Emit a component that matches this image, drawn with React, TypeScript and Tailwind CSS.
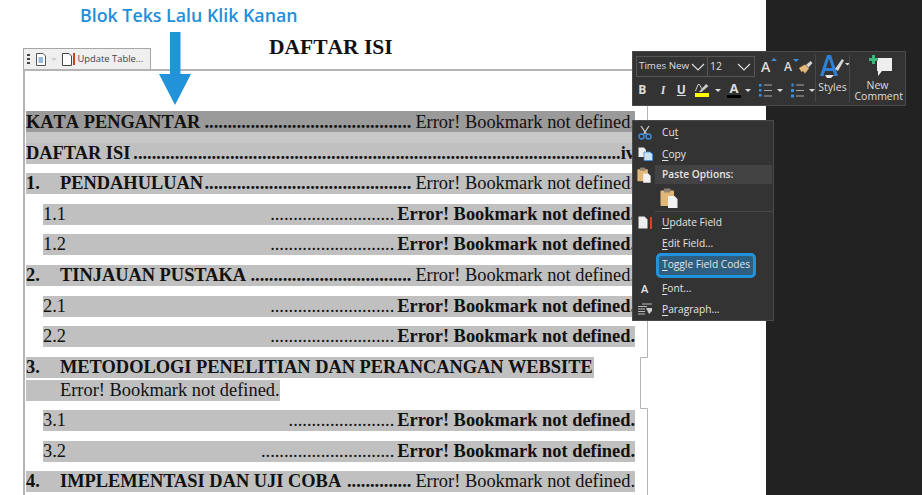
import React from "react";

const serif = "font-['Liberation_Serif','Times_New_Roman',serif]";

type RowProps = {
  mt: string;
  label: string;
  num?: string;
  dots: number;
  rowClass?: string;
  page?: boolean;
};

function HeadRow({ mt, num, label, dots, rowClass = "bg-[#c0c0c0]", page }: RowProps) {
  return (
    <div className={`${mt} ${rowClass} h-[21px] flex items-center justify-between whitespace-nowrap text-[18.4px] leading-[19px] text-[#111]`}>
      <span className="flex font-bold">
        {num && <span className="w-[34px]">{num}</span>}
        <span>{label}</span>
      </span>
      <span className="flex">
        <span className="font-bold">{".".repeat(dots)}</span>
        {page ? <span className="font-bold">iv</span> : <span className="ml-[4px]">Error! Bookmark not defined.</span>}
      </span>
    </div>
  );
}

function SubRow({ mt, label, dots }: RowProps) {
  return (
    <div className={`${mt} ml-[17px] bg-[#c0c0c0] h-[21px] flex items-center justify-between whitespace-nowrap text-[18.4px] leading-[19px] text-[#111]`}>
      <span>{label}</span>
      <span className="flex">
        <span>{".".repeat(dots)}</span>
        <span className="ml-[3px] font-bold">Error! Bookmark not defined.</span>
      </span>
    </div>
  );
}

function Hotkey({ k, rest, before = "" }: { k: string; rest: string; before?: string }) {
  return (
    <span>
      {before}
      <span className="underline underline-offset-2">{k}</span>
      {rest}
    </span>
  );
}

function MenuRow({ icon, children, className = "h-[22px]" }: { icon?: React.ReactNode; children: React.ReactNode; className?: string }) {
  return (
    <div className={`${className} flex items-center`}>
      <span className="w-[29px] shrink-0 pl-[5px] flex justify-start">{icon}</span>
      {children}
    </div>
  );
}

function ClipboardIcon({ w = 18, h = 20 }: { w?: number; h?: number }) {
  return (
    <svg width={w} height={h} viewBox="0 0 18 20">
      <rect x="0.5" y="2.5" width="13.5" height="15.5" rx="1" fill="#e3b778" />
      <rect x="4" y="0.5" width="6.5" height="4" fill="#8f8371" />
      <path d="M8 8H14.5L17.5 11V20H8Z" fill="#f2f2f2" />
    </svg>
  );
}

function Caret() {
  return <span className="block w-0 h-0 border-x-[3px] border-x-transparent border-t-[3px] border-t-[#ddd]" />;
}

function Chevron() {
  return (
    <svg width="14" height="8" viewBox="0 0 14 8">
      <path d="M1 1L7 7L13 1" fill="none" stroke="#ddd" strokeWidth="1.2" />
    </svg>
  );
}

function ListIcon({ numbered }: { numbered?: boolean }) {
  return (
    <svg width="13" height="15" viewBox="0 0 13 15">
      {numbered ? (
        <>
          <rect x="0.5" y="0.5" width="2" height="3" fill="#3a8fe0" />
          <rect x="0" y="6" width="3" height="3" fill="#3a8fe0" />
          <rect x="0" y="11.5" width="3" height="3" fill="#3a8fe0" />
        </>
      ) : (
        <>
          <rect x="0" y="1" width="2.5" height="2.5" fill="#3a8fe0" />
          <rect x="0" y="6" width="2.5" height="2.5" fill="#3a8fe0" />
          <rect x="0" y="11" width="2.5" height="2.5" fill="#3a8fe0" />
        </>
      )}
      <path d="M5 2H13M5 7.5H13M5 13H13" stroke="#aaa" strokeWidth="1.2" />
    </svg>
  );
}

function MiniToolbar() {
  return (
    <div className="absolute left-[632px] top-[51px] w-[274px] h-[55px] bg-[#333] border border-[#4a4a4a] flex text-[#ddd] font-['Open_Sans',sans-serif] text-[10.5px]">
      <div className="w-[182px] shrink-0 pl-[3px] pt-[4px]">
        <div className="flex items-center">
          <div className="w-[72px] h-[21px] border border-[#555] flex items-center justify-between pl-[2px] pr-[2px]">
            <span className="text-[9.8px] whitespace-nowrap">Times New</span>
            <Chevron />
          </div>
          <div className="w-[47px] h-[21px] border border-l-0 border-[#555] flex items-center justify-between pl-[2px] pr-[3px]">
            <span>12</span>
            <Chevron />
          </div>
          <span className="ml-[6px] flex items-center">
            <span className="relative w-[12px] font-semibold text-[14px] leading-none text-[#ddd]">
              A<span className="absolute top-[-2px] right-[-4px] w-0 h-0 border-x-[3px] border-x-transparent border-b-[3px] border-b-[#3a8fe0]" />
            </span>
            <span className="relative ml-[11px] w-[10px] font-semibold text-[12px] leading-none text-[#ddd]">
              A<span className="absolute top-[-2px] right-[-5px] w-0 h-0 border-x-[3px] border-x-transparent border-t-[3px] border-t-[#3a8fe0]" />
            </span>
            <svg className="ml-[4px]" width="15" height="14" viewBox="0 0 15 14">
              <path d="M8 5L12.5 1L14.5 3L10.5 7.5Z" fill="#d5d5d5" />
              <path d="M1 8L7 4.5L11 8.5L7 13.5L5 11L3.5 12Z" fill="#e3b778" />
            </svg>
          </span>
        </div>
        <div className="flex items-center mt-[3px] h-[20px] font-bold">
          <span className="w-[9px] ml-[2px] text-center text-[12px] leading-none">B</span>
          <span className="w-[8px] ml-[13px] text-center text-[12px] leading-none italic font-['Liberation_Serif',serif]">I</span>
          <span className="w-[10px] ml-[10px] text-center text-[12px] leading-none underline">U</span>
          <span className="ml-[9px] flex flex-col items-center w-[14px]">
            <svg width="14" height="10" viewBox="0 0 14 10">
              <path d="M4 9L11 1L13.5 3L6.5 9Z" fill="#ccc" />
              <path d="M0.5 8L3 1.5H4.5L7 6" fill="none" stroke="#ccc" />
            </svg>
            <span className="w-[14px] h-[4px] bg-[#ffff00]" />
          </span>
          <span className="ml-[6px]"><Caret /></span>
          <span className="ml-[6px] flex flex-col items-center w-[14px] leading-none">
            <span className="text-[13px] h-[11px] leading-[11px]">A</span>
            <span className="w-[14px] h-[3px] bg-black mt-px" />
          </span>
          <span className="ml-[4px]"><Caret /></span>
          <span className="ml-[8px]"><ListIcon /></span>
          <span className="ml-[5px]"><Caret /></span>
          <span className="ml-[8px]"><ListIcon numbered /></span>
          <span className="ml-[5px]"><Caret /></span>
        </div>
      </div>
      <div className="w-[34px] shrink-0 border-l border-[#484848] my-[3px] flex flex-col items-center">
        <svg className="ml-[4px]" width="30" height="24" viewBox="0 0 30 24">
          <path d="M7 0H11L18 21H14.5L13 16H5L3.5 21H0Z M6 13H12L9 3.5Z" fill="#2f80d8" fillRule="evenodd" />
          <path d="M5 20H14L11 23H7Z" fill="#e8e8e8" />
          <path d="M15 14L22 4L24 5.5L18 16Z" fill="#d5d5d5" />
          <path d="M25 8H30L27.5 10.5Z" fill="#ddd" />
        </svg>
        <span className="mt-[3px] leading-none">Styles</span>
      </div>
      <div className="flex-1 border-l border-[#484848] my-[3px] flex flex-col items-center text-center">
        <svg className="ml-[7px]" width="24" height="24" viewBox="0 0 24 24">
          <path d="M8 3H23V16H13L9 21V16H8Z" fill="#eee" />
          <path d="M0 3H3V0H6V3H9V6H6V9H3V6H0Z" fill="#3fb57a" />
        </svg>
        <span className="mt-[1px] leading-[11px] w-[46px]">New Comment</span>
      </div>
    </div>
  );
}

function ContextMenu() {
  return (
    <div className="absolute left-[632px] top-[120px] w-[142px] h-[201px] bg-[#333] border border-[#4a4a4a] text-[#e4e4e4] font-['Open_Sans',sans-serif] text-[10.2px] leading-none">
      <MenuRow
        icon={
          <svg width="14" height="15" viewBox="0 0 14 15">
            <path d="M3 1L9 10M11 1L5 10" stroke="#ccc" strokeWidth="1.3" />
            <circle cx="3.5" cy="11.5" r="2.5" fill="none" stroke="#3a8fe0" strokeWidth="1.4" />
            <circle cx="10.5" cy="11.5" r="2.5" fill="none" stroke="#3a8fe0" strokeWidth="1.4" />
          </svg>
        }
      >
        <Hotkey before="Cu" k="t" rest="" />
      </MenuRow>
      <MenuRow
        icon={
          <svg width="15" height="14" viewBox="0 0 15 14">
            <path d="M0.5 0.5H6L8 3V10H0.5Z" fill="#eee" />
            <path d="M6 5H12L14.5 7V13.5H6Z" fill="#cfe0f2" stroke="#3a8fe0" strokeWidth="0.8" />
          </svg>
        }
      >
        <Hotkey k="C" rest="opy" />
      </MenuRow>
      <div className="h-[19px] flex items-center">
        <span className="w-[22px] shrink-0 pl-[4px] flex justify-start"><ClipboardIcon w={14} h={16} /></span>
        <span className="flex-1 h-full bg-[#434343] mr-[1px] pl-[7px] flex items-center font-semibold">Paste Options:</span>
      </div>
      <div className="h-[27px] flex items-center pl-[27px]"><ClipboardIcon /></div>
      <div className="h-px bg-[#484848] ml-[22px]" />
      <MenuRow
        className="h-[21px]"
        icon={
          <span className="flex items-center gap-[2px]">
            <svg width="10" height="13" viewBox="0 0 10 13">
              <path d="M0.5 0.5H6.5L9.5 3.5V12.5H0.5Z" fill="#eee" />
            </svg>
            <span className="w-[2px] h-[12px] bg-[#d9431e]" />
          </span>
        }
      >
        <Hotkey k="U" rest="pdate Field" />
      </MenuRow>
      <MenuRow className="h-[20px]">
        <Hotkey k="E" rest="dit Field..." />
      </MenuRow>
      <div className="h-[25px] ml-[23px] mr-[17px] border-[3px] border-[#1f93dc] rounded-[5px] bg-[#2f5f80] flex items-center pl-[3px] pb-[2px] whitespace-nowrap">
        <Hotkey k="T" rest="oggle Field Codes" />
      </div>
      <MenuRow icon={<span className="pl-[3px] font-semibold text-[11px]">A</span>} className="h-[20px]">
        <Hotkey k="F" rest="ont..." />
      </MenuRow>
      <MenuRow
        className="h-[22px]"
        icon={
          <svg width="14" height="12" viewBox="0 0 14 12">
            <path d="M4 1H14M0 3.5H9M0 6H7M0 8.5H7M0 11H7" stroke="#bbb" />
            <path d="M8 5H14V8L11 11Z" fill="#ccc" />
          </svg>
        }
      >
        <Hotkey k="P" rest="aragraph..." />
      </MenuRow>
    </div>
  );
}

export default function App() {
  return (
    <div className="relative w-[922px] h-[495px] overflow-hidden flex bg-white">
      <div className="w-[766px] shrink-0 bg-white">
        <div className="h-[69px] relative">
          <p className="pl-[80px] pt-[3px] font-['Open_Sans',sans-serif] font-semibold text-[17.8px] leading-[24px] text-[#1f8fd8]">
            Blok Teks Lalu Klik Kanan
          </p>
          <div className="absolute left-[23px] bottom-0 w-[128px] h-[21px] bg-[#efefef] border border-b-0 border-[#a6a6a6] flex items-center pl-[3px]">
            <span className="flex flex-col gap-[1.5px]">
              <span className="w-[2.5px] h-[2.5px] bg-[#444]" />
              <span className="w-[2.5px] h-[2.5px] bg-[#444]" />
              <span className="w-[2.5px] h-[2.5px] bg-[#444]" />
            </span>
            <svg className="ml-[6px]" width="10" height="13" viewBox="0 0 10 13">
              <path d="M0.5 0.5H7L9.5 3V12.5H0.5Z" fill="#fff" stroke="#555" />
              <path d="M2.5 5H7M2.5 7H7M2.5 9H7" stroke="#2f75b5" />
            </svg>
            <span className="ml-[5px] w-0 h-0 border-x-[3px] border-x-transparent border-t-[3px] border-t-[#ccc]" />
            <svg className="ml-[5px]" width="10" height="13" viewBox="0 0 10 13">
              <path d="M0.5 0.5H7L9.5 3V12.5H0.5Z" fill="#fff" stroke="#444" />
            </svg>
            <span className="ml-[1px] w-[2px] h-[12px] bg-[#c8401c]" />
            <span className="ml-[3px] font-['Open_Sans',sans-serif] text-[9.4px] text-[#444] whitespace-nowrap">Update Table...</span>
          </div>
          <h1 className={`${serif} absolute left-[269px] top-[35px] font-bold text-[21.5px] [font-kerning:none] leading-[24px] text-[#111]`}>
            DAFTAR ISI
          </h1>
        </div>
        <div className={`${serif} ml-[23px] w-[612px] h-[426px] border-l-2 border-t-2 border-[#b4b4b4] pl-[1px] pt-[40px]`}>
          <HeadRow mt="" label="KATA PENGANTAR" dots={45} rowClass="bg-[#9a9a9a] [font-kerning:none] pt-[2px]" />
          <div className="bg-[#c8c8c8] h-[11px]" />
          <HeadRow mt="" label="DAFTAR ISI" dots={106} page />
          <HeadRow mt="mt-[9px]" num="1." label="PENDAHULUAN" dots={45} />
          <SubRow mt="mt-[10px]" label="1.1" dots={27} />
          <SubRow mt="mt-[9px]" label="1.2" dots={27} />
          <HeadRow mt="mt-[10px]" num="2." label="TINJAUAN PUSTAKA" dots={35} />
          <SubRow mt="mt-[10px]" label="2.1" dots={27} />
          <SubRow mt="mt-[9px]" label="2.2" dots={27} />
          <div className="mt-[10px] h-[21px] w-[568px] bg-[#c0c0c0] flex items-center text-[18.4px] leading-[19px] font-bold text-[#111] whitespace-nowrap">
            <span className="w-[34px] shrink-0">3.</span>
            METODOLOGI PENELITIAN DAN PERANCANGAN WEBSITE
          </div>
          <div className="mt-[2px] h-[21px] w-[254px] pl-[34px] bg-[#c0c0c0] text-[18.4px] leading-[21px] text-[#111] whitespace-nowrap">
            Error! Bookmark not defined.
          </div>
          <SubRow mt="mt-[9px]" label="3.1" dots={23} />
          <SubRow mt="mt-[10px]" label="3.2" dots={29} />
          <HeadRow mt="mt-[9px]" num="4." label="IMPLEMENTASI DAN UJI COBA" dots={14} />
        </div>
      </div>
      <div className="flex-1 bg-[#222]" />

      {/* field border on the right, drawn over the rows */}
      <svg className="absolute left-[636px] top-[69px]" width="14" height="426" viewBox="0 0 14 426">
        <path d="M0 1H11.5V288.5H4.5V339.5H11.5V426" fill="none" stroke="#b4b4b4" />
      </svg>

      {/* arrow */}
      <svg className="absolute left-[159px] top-[32px]" width="32" height="74" viewBox="0 0 32 74">
        <path d="M11 0H21.5V42H32L16 73L0 42H11Z" fill="#2293d9" />
      </svg>

      <MiniToolbar />
      <ContextMenu />
    </div>
  );
}
